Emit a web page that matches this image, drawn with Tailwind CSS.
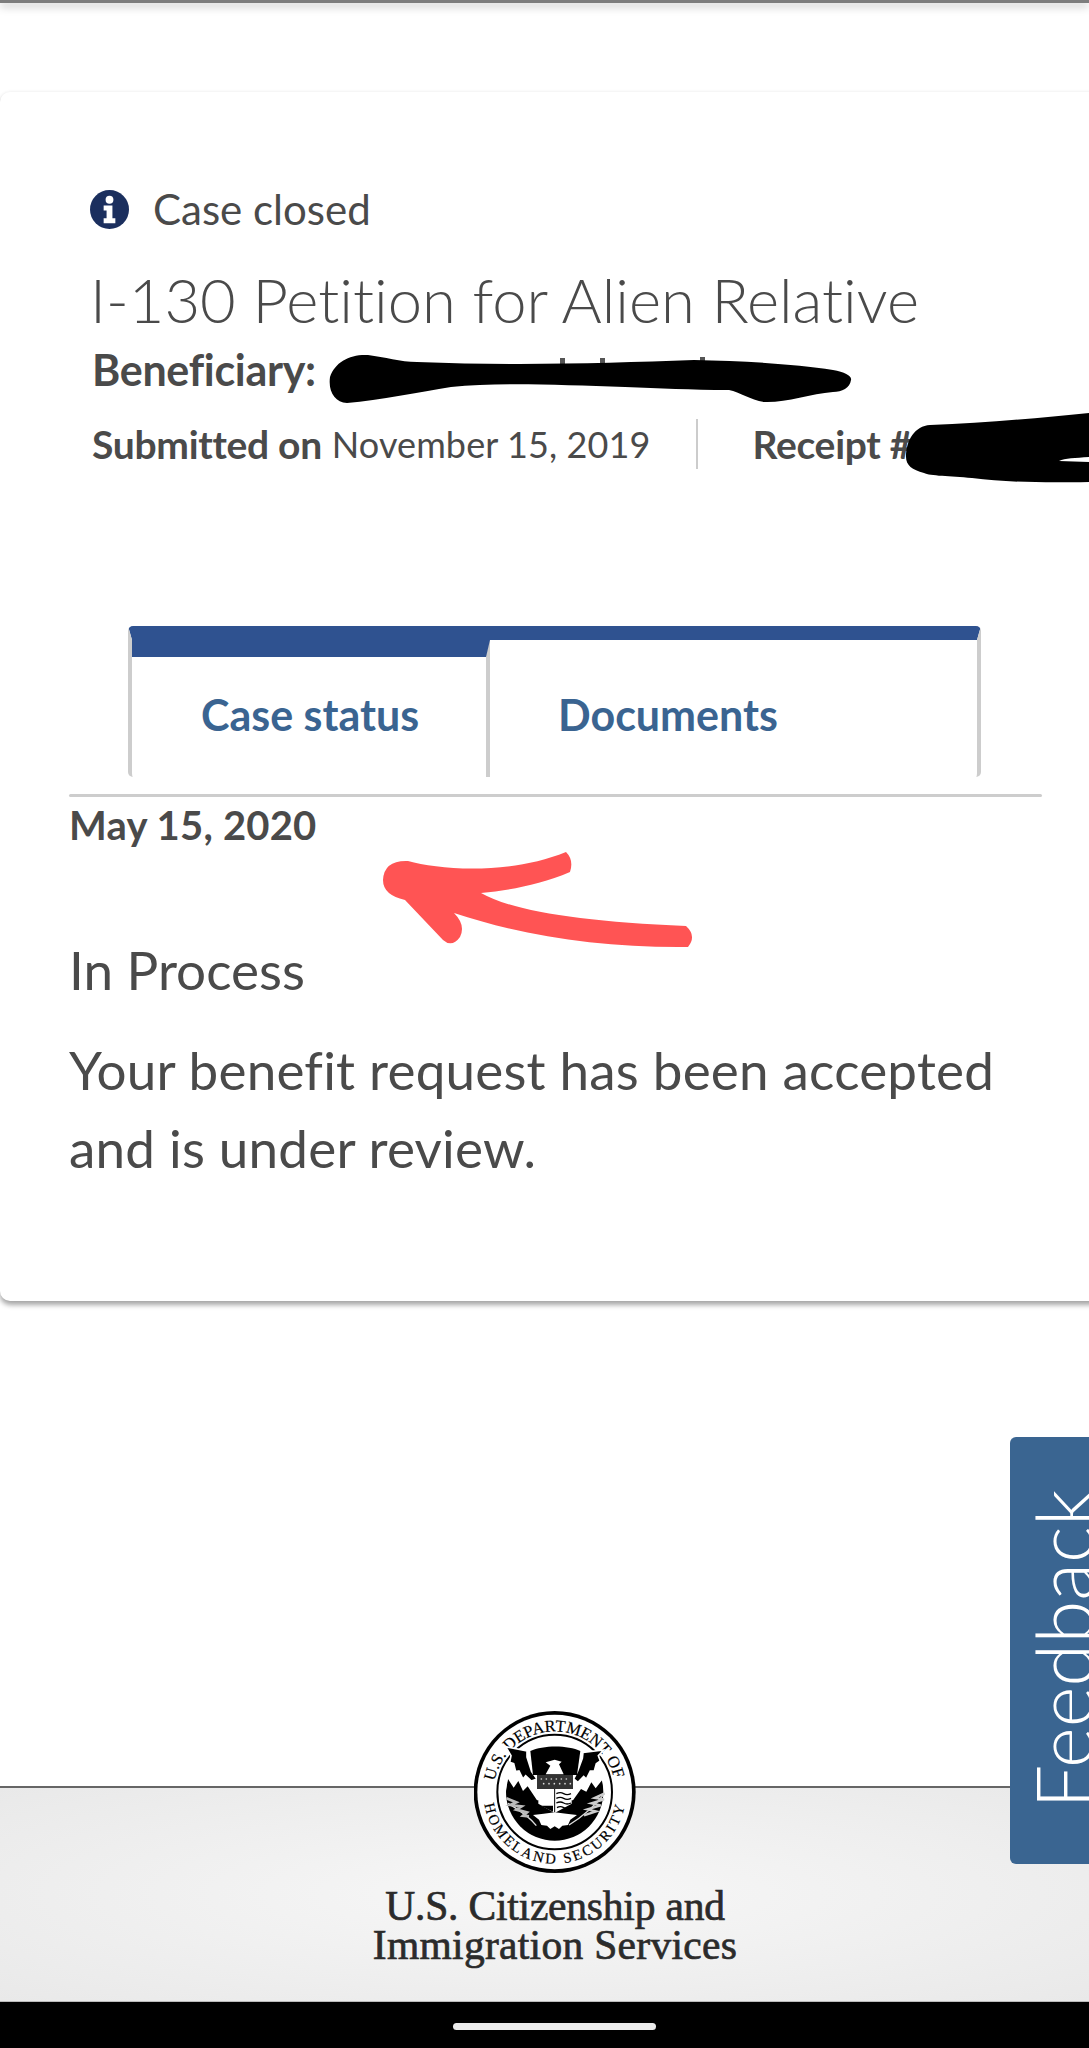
<!DOCTYPE html>
<html>
<head>
<meta charset="utf-8">
<script src="https://cdn.jsdelivr.net/npm/@tailwindcss/browser@4"></script>
</head>
<body class="bg-white">
<div class="relative flex h-[2048px] w-[1089px] flex-col overflow-hidden bg-white font-['Lato',sans-serif] text-[#4a4a4a] [font-variant-ligatures:none]">
  <div class="h-[3px] w-full shrink-0 bg-[#7d7d7d] shadow-[0_3px_8px_rgba(0,0,0,0.35)]"></div>

  <section class="relative mt-[89px] w-[1110px] shrink-0 rounded-[10px] bg-white pt-[97px] pb-[114px] shadow-[0_4px_5px_rgba(0,0,0,0.35),0_-1px_3px_rgba(0,0,0,0.04)]">
    <div class="flex h-[40px] items-center gap-[24px] pl-[90px]">
      <svg class="h-[39px] w-[39px]" viewBox="0 0 40 40"><circle cx="20" cy="20" r="20" fill="#1b2f5e"/><circle cx="20" cy="10" r="4" fill="#fff"/><path d="M14 16h9v13h3v5H14v-5h3v-8h-3z" fill="#fff"/></svg>
      <span class="text-[42px] leading-[40px]">Case closed</span>
    </div>
    <h1 class="mt-[35px] pl-[90px] text-[61.5px] leading-[70px] font-light">I-130 Petition for Alien Relative</h1>
    <div class="mt-[16px] pl-[92px] text-[43px] leading-[40px] font-bold tracking-[-0.3px]">Beneficiary:</div>
    <div class="mt-[29px] flex h-[50px] items-center pl-[92px] text-[36px]">
      <span class="text-[39px] font-bold tracking-[-0.3px]">Submitted on</span><span class="ml-[10px] tracking-[0.1px]">November 15, 2019</span>
      <span class="ml-[46px] h-[50px] w-[2px] bg-[#cccccc]"></span>
      <span class="ml-[54px] text-[39px] font-bold tracking-[-0.3px]">Receipt #</span>
    </div>

    <div class="mt-[157px] ml-[128px] grid h-[151px] w-[853px] grid-cols-[358px_1fr] rounded-[5px] border-x-[4px] border-t-[14px] border-x-[#cdcdcd] border-t-[#2f5290]">
      <div class="flex items-center border-t-[17px] border-r-[4px] border-t-[#2f5290] border-r-[#cdcdcd] pb-[4px] pl-[69px] text-[43px] font-bold text-[#3a6491]">Case status</div>
      <div class="flex items-center pt-[13px] pl-[68px] text-[43px] font-bold text-[#3a6491]">Documents</div>
    </div>
    <div class="mt-[17px] ml-[69px] h-[3px] w-[973px] rounded-[2px] bg-[#cdcdcd]"></div>
    <div class="mt-[3px] pl-[69px] text-[40px] leading-[50px] font-bold tracking-[0.2px]">May 15, 2020</div>
    <div class="mt-[90px] pl-[69px] text-[53px] leading-[60px]">In Process</div>
    <p class="mt-[31px] pl-[69px] text-[53px] leading-[78px] tracking-[0.2px] whitespace-nowrap">Your benefit request has been accepted<br>and is under review.</p>
  </section>

  <footer class="relative mt-auto h-[215px] shrink-0 border-t-[2px] border-t-[#666666] bg-[radial-gradient(ellipse_at_center,#f7f7f7_0%,#e9e9e9_100%)] pt-[99px] pl-[21px] text-center font-['Liberation_Serif',serif] text-[41.5px] leading-[39px] text-[#2b2b2b] [-webkit-text-stroke:0.7px_#2b2b2b]">
    <svg class="absolute top-[-77px] left-[474px] h-[162px] w-[162px]" viewBox="103 58 486 486">
      <defs>
        <path id="arcTop" d="M 165 269 A 183 183 0 0 1 523 260"/>
        <path id="arcBottom" d="M 134 338 A 214 214 0 0 0 556 338"/>
        <clipPath id="inner"><circle cx="345" cy="301" r="146"/></clipPath>
      </defs>
      <circle cx="345" cy="301" r="243" fill="#000"/>
      <circle cx="345" cy="301" r="232" fill="#fff"/>
      <circle cx="345" cy="301" r="172" fill="none" stroke="#000" stroke-width="6"/>
      <text font-family="Liberation Serif, serif" font-size="50" fill="#000" stroke="#000" stroke-width="0.6"><textPath href="#arcTop" textLength="500" lengthAdjust="spacingAndGlyphs">U.S. DEPARTMENT OF</textPath></text>
      <text font-family="Liberation Serif, serif" font-size="44" fill="#000" stroke="#000" stroke-width="0.6"><textPath href="#arcBottom" textLength="595" lengthAdjust="spacing">HOMELAND SECURITY</textPath></text>
      <path clip-path="url(#inner)" d="M 205 262 L 222 288 L 236 268 L 250 298 L 264 284 L 292 326 L 400 326 L 424 292 L 440 300 L 455 272 L 468 290 L 490 262 L 520 460 L 170 460 Z" fill="#000"/>
      <path d="M 198 165 L 262 178 L 262 196 L 276 240 L 292 262 L 275 268 L 258 252 L 250 262 L 238 238 L 228 240 L 222 216 L 210 212 L 214 192 Z" fill="#000" stroke="#fff" stroke-width="5"/>
      <path d="M 492 175 L 430 182 L 428 200 L 414 238 L 402 262 L 415 272 L 432 254 L 440 262 L 452 238 L 464 238 L 470 216 L 482 208 L 476 192 Z" fill="#000" stroke="#fff" stroke-width="5"/>
      <path d="M 272 178 C 310 160 385 160 422 178 L 412 250 L 280 250 Z" fill="#000"/>
      <path d="M 318 212 L 345 204 L 366 210 L 358 218 L 372 248 L 318 248 L 332 222 Z" fill="#fff"/>
      <rect x="292" y="250" width="108" height="42" fill="#333"/>
      <g fill="#ddd"><circle cx="305" cy="262" r="2.5"/><circle cx="320" cy="262" r="2.5"/><circle cx="335" cy="262" r="2.5"/><circle cx="350" cy="262" r="2.5"/><circle cx="365" cy="262" r="2.5"/><circle cx="380" cy="262" r="2.5"/><circle cx="312" cy="276" r="2.5"/><circle cx="328" cy="276" r="2.5"/><circle cx="344" cy="276" r="2.5"/><circle cx="360" cy="276" r="2.5"/><circle cx="376" cy="276" r="2.5"/><circle cx="392" cy="276" r="2.5"/></g>
      <path d="M 296 292 L 396 292 L 396 336 L 345 364 L 296 336 Z" fill="#fff"/>
      <path d="M 345 292 V 364" stroke="#000" stroke-width="3"/>
      <path d="M 350 306 q 12 -6 22 0 t 22 0 M 350 320 q 12 -6 22 0 t 22 0 M 350 334 q 12 -6 22 0 t 22 0 M 352 348 q 10 -6 20 0 t 20 -6" fill="none" stroke="#000" stroke-width="4"/>
      <path d="M 304 342 L 340 342 L 340 360 Z" fill="#000"/>
      <path d="M 280 370 L 312 366 L 345 362 L 380 366 L 412 370 L 392 384 L 385 400 L 368 402 L 358 412 L 345 404 L 332 412 L 322 402 L 305 400 L 298 384 Z" fill="#fff"/>
      <path d="M 205 335 C 230 350 265 370 290 402" fill="none" stroke="#ddd" stroke-width="4"/>
      <path d="M 200 320 l 30 12 l -18 8 l 34 4 l -16 10 l 32 8 l -12 10 l 18 2" fill="none" stroke="#bbb" stroke-width="8"/>
      <path d="M 388 400 C 420 380 460 350 495 305" fill="none" stroke="#ddd" stroke-width="4"/>
      <path d="M 495 305 l -30 14 l 28 4 l -38 12 l 28 6 l -40 12 l 26 6 l -36 12" fill="none" stroke="#ccc" stroke-width="7"/>
    </svg>
    <div class="tracking-[-0.2px]">U.S. Citizenship and</div>
    <div class="tracking-[0.3px]">Immigration Services</div>
  </footer>

  <div class="flex h-[47px] shrink-0 items-start justify-center border-t border-t-[#bbbbbb] bg-black pt-[21px] pl-[20px]">
    <div class="h-[7px] w-[203px] rounded-full bg-[#ececec]"></div>
  </div>

  <div class="absolute top-[1437px] left-[1010px] h-[427px] w-[100px] rounded-[6px] bg-[#3a6591]">
    <span class="absolute bottom-[55px] left-[14px] text-[78px] leading-[1] font-light text-white [writing-mode:vertical-rl] rotate-180">Feedback</span>
  </div>

  <svg class="absolute top-0 left-0 h-[2048px] w-[1089px]" viewBox="0 0 1089 2048">
    <g fill="#555"><rect x="560" y="358" width="5" height="10"/><rect x="600" y="358" width="5" height="8"/><rect x="700" y="357" width="5" height="10"/></g>
    <path d="M330 377 C335 362 350 354 368 355 C385 357 400 362 417 362 C520 366 610 363 694 360 C745 361 795 364 833 370 C845 372 852 376 851 380 C850 388 842 392 833 392 C810 394 785 403 764 402 C750 400 740 392 729 390 C690 390 660 388 625 387 C560 385 500 382 451 387 C420 392 380 400 347 403 C335 402 328 392 330 377 Z" fill="#000"/>
    <path d="M906 457 C906 440 915 426 930 425 C985 423 1040 418 1089 413 L1089 457 C1075 458 1065 458 1059 461 L1089 462 L1089 482 C1040 483 1005 482 972 478 C950 476 930 476 924 473 C912 470 906 465 906 457 Z" fill="#000"/>
    <path d="M566 852 Q574 860 570 872 C540 885 510 890 481 893 C510 910 580 922 686 926 Q697 936 688 947 C600 948 520 935 454 913 Q466 925 460 937 Q452 948 443 940 L405 900 Q383 895 383 880 Q384 860 408 861 C440 870 510 875 566 852 Z" fill="#ff5454"/>
  </svg>
</div>
</body>
</html>
